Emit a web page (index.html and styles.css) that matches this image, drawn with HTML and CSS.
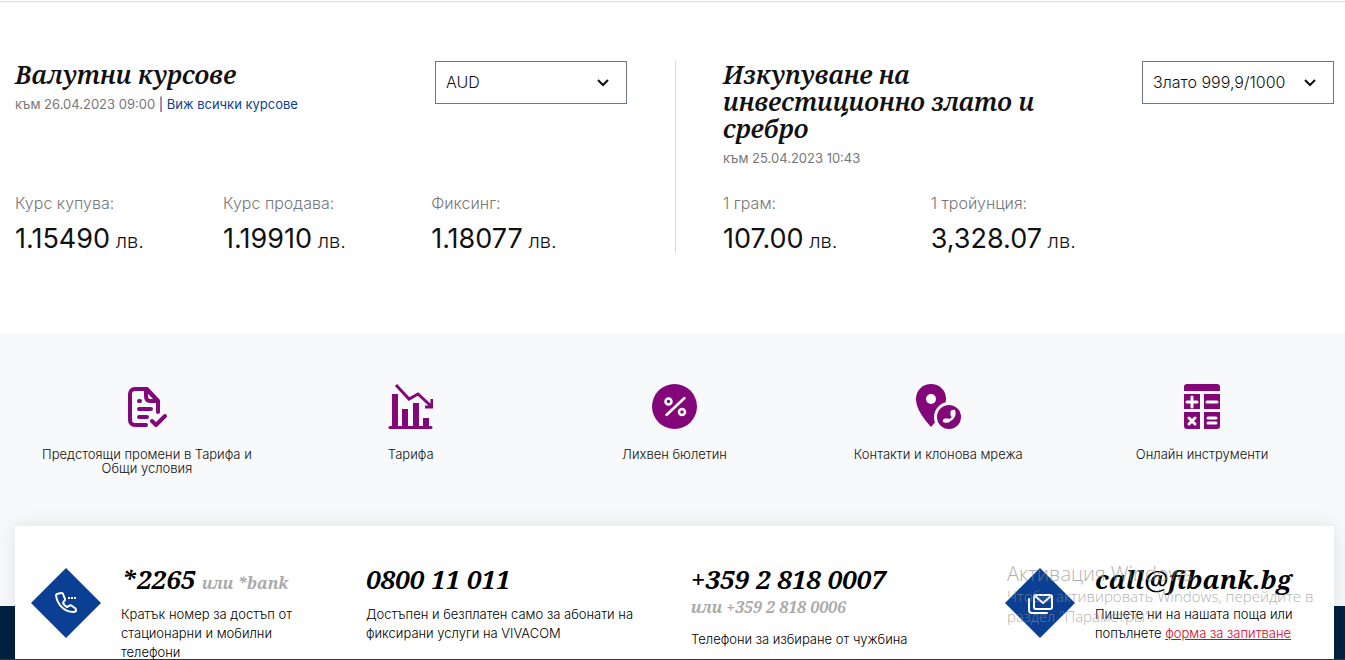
FILE: index.html
```html
<!DOCTYPE html>
<html lang="bg">
<head>
    <meta charset="UTF-8">
    <meta name="viewport" content="width=device-width, initial-scale=1.0">
    <title>Валутни курсове</title>
    <link rel="stylesheet" href="styles.css">
</head>
<body>
    <main class="rates">
        <section class="rate-box">
            <div class="rate-head">
                <div class="rate-title">
                    <h2>Валутни курсове</h2>
                    <p class="date">към 26.04.2023 09:00 <span class="bar">|</span> <a href="#">Виж всички курсове</a></p>
                </div>
                <div class="select">
                    <select aria-label="Валута">
                        <option>AUD</option>
                        <option>EUR</option>
                        <option>USD</option>
                    </select>
                    <svg width="12" height="8" viewBox="0 0 12 8"><path d="M1 1l5 5 5-5" fill="none" stroke="#111" stroke-width="2"/></svg>
                </div>
            </div>
            <dl class="values">
                <div><dt>Курс купува:</dt><dd>1.15490<small> лв.</small></dd></div>
                <div><dt>Курс продава:</dt><dd>1.19910<small> лв.</small></dd></div>
                <div><dt>Фиксинг:</dt><dd>1.18077<small> лв.</small></dd></div>
            </dl>
        </section>
        <section class="rate-box">
            <div class="rate-head">
                <div class="rate-title">
                    <h2>Изкупуване на инвестиционно злато и сребро</h2>
                    <p class="date">към 25.04.2023 10:43</p>
                </div>
                <div class="select">
                    <select aria-label="Метал">
                        <option>Злато 999,9/1000</option>
                        <option>Сребро 999/1000</option>
                    </select>
                    <svg width="12" height="8" viewBox="0 0 12 8"><path d="M1 1l5 5 5-5" fill="none" stroke="#111" stroke-width="2"/></svg>
                </div>
            </div>
            <dl class="values">
                <div><dt>1 грам:</dt><dd>107.00<small> лв.</small></dd></div>
                <div><dt>1 тройунция:</dt><dd>3,328.07<small> лв.</small></dd></div>
            </dl>
        </section>
    </main>

    <nav class="links">
        <a href="#">
            <svg viewBox="0 0 45 45" fill="none" stroke="#830779" stroke-width="4" stroke-linecap="round" stroke-linejoin="round">
                <path d="M22 41H11c-3 0-5-2-5-5V10c0-3 2-5 5-5h12l11 12v11"/>
                <path d="M22 5v7c0 3 1 5 4 5h8M24 7l9 9"/>
                <path d="M15 17h1M15 25h12M15 33h8M28 37l4 4 9-9"/>
            </svg>
            <span>Предстоящи промени в Тарифа и Общи условия</span>
        </a>
        <a href="#">
            <svg viewBox="0 0 45 45" fill="#830779">
                <path d="M4 10h6v32H4zM14 25h6v17h-6zM25 19h6v23h-6zM35 34h6v8h-6z"/>
                <path d="M2 43.5h41" stroke="#830779" stroke-width="3" stroke-linecap="round"/>
                <path d="M8 1l13 14 9-5 13 12M37 23h7v-8" fill="none" stroke="#830779" stroke-width="3"/>
            </svg>
            <span>Тарифа</span>
        </a>
        <a href="#">
            <svg viewBox="0 0 45 45">
                <circle cx="22.5" cy="22.5" r="22.5" fill="#830779"/>
                <g fill="none" stroke="#fff" stroke-width="2.5" stroke-linecap="round">
                    <path d="M14.500 31l18-17"/>
                    <circle cx="16.500" cy="17.500" r="3"/>
                    <circle cx="30" cy="28" r="3"/>
                </g>
            </svg>
            <span>Лихвен бюлетин</span>
        </a>
        <a href="#">
            <svg viewBox="0 0 45 45">
                <path d="M15 0C7 0 0 6 0 15c0 10 8 20 15 28 8-9 15-18 15-28C30 6 23 0 15 0z" fill="#830779"/>
                <circle cx="15" cy="15" r="5" fill="#fff"/>
                <circle cx="33" cy="33" r="15" fill="#f8f9fb"/>
                <circle cx="33" cy="33" r="12" fill="#830779"/>
                <path d="M38 27c2 6-4 11-10 10" fill="none" stroke="#fff" stroke-width="2.5" stroke-linecap="round"/>
                <path d="M36.500 28v3M29 36.500h3" stroke="#fff" stroke-width="4" stroke-linecap="round"/>
            </svg>
            <span>Контакти и клонова мрежа</span>
        </a>
        <a href="#">
            <svg viewBox="0 0 45 45">
                <path d="M4 7V3c0-2 1-3 3-3h30c2 0 3 1 3 3v4zM4 10h16v15H4zM24 10h16v15H24zM4 28h16v17H7c-2 0-3-1-3-3zM24 28h16v14c0 2-1 3-3 3H24z" fill="#830779"/>
                <path d="M7 18h10M12 13v10M27 18h10M9 34l6 6M15 34l-6 6M28 34h8M28 39h8" stroke="#fff" stroke-width="3" stroke-linecap="round"/>
            </svg>
            <span>Онлайн инструменти</span>
        </a>
    </nav>

    <footer class="footer">
        <div class="contacts">
            <div class="contact">
                <svg class="diamond" viewBox="0 0 70 70">
                    <path d="M35 0l35 35-35 35L0 35z" fill="#0a3f94"/>
                    <g fill="none" stroke="#fff" stroke-width="2" stroke-linejoin="round">
                        <path d="M26 26l4-1c1 0 2 0 2 1l2 5c0 1 0 2-1 2l-1 2c1 2 2 3 4 4l2-1c1-1 2-1 3 0l3 2c1 1 1 1 1 2v1c-1 1-2 1-3 1-9 0-16-8-17-17z"/>
                        <path d="M37 30h2M40 30h2M43 30h2"/>
                    </g>
                </svg>
                <div>
                    <h3>*2265 <small>или *bank</small></h3>
                    <p>Кратък номер за достъп от стационарни и мобилни телефони</p>
                </div>
            </div>
            <div class="contact">
                <div>
                    <h3>0800 11 011</h3>
                    <p>Достъпен и безплатен само за абонати на фиксирани услуги на VIVACOM</p>
                </div>
            </div>
            <div class="contact">
                <div>
                    <h3>+359 2 818 0007</h3>
                    <h4>или +359 2 818 0006</h4>
                    <p>Телефони за избиране от чужбина</p>
                </div>
            </div>
            <div class="contact">
                <svg class="diamond" viewBox="0 0 70 70">
                    <path d="M35 0l35 35-35 35L0 35z" fill="#0a3f94"/>
                    <g fill="none" stroke="#fff" stroke-width="2" stroke-linecap="round" stroke-linejoin="round">
                        <rect x="29" y="27" width="18" height="14" rx="2"/>
                        <path d="M30 28l8 7 8-7M24 31v11c0 2 1 3 3 3h15"/>
                    </g>
                </svg>
                <div>
                    <h3>call@fibank.bg</h3>
                    <p>Пишете ни на нашата поща или попълнете <a href="#">форма за запитване</a></p>
                </div>
            </div>
        </div>
    </footer>

    <aside class="activation">
        <strong>Активация Windows</strong>
        <p>Чтобы активировать Windows, перейдите в раздел "Параметры".</p>
    </aside>
</body>
</html>
```
FILE: styles.css
```css
* {
    box-sizing: border-box;
}
body {
    margin: 0;
    height: 100vh;
    overflow: hidden;
    display: flex;
    flex-direction: column;
    border-top: 1px solid #fff;
    border-bottom: 1px solid #333;
    background: #fff;
    color: #111;
    font-family: Inter, "Liberation Sans", sans-serif;
    font-weight: 300;
}
h2, h3, h4, p, dl, dd {
    margin: 0;
}
h2, h3, h4 {
    font-family: "Noto Serif", "Droid Serif", "DejaVu Serif", serif;
    font-style: italic;
    font-weight: 700;
}

/* rates */
.rates {
    display: grid;
    grid-template-columns: 661fr 658fr;
    border-top: 1px solid #dcdcdc;
    padding: 59px 11px 80px 15px;
}
.rate-box {
    display: flex;
    flex-direction: column;
    justify-content: space-between;
    gap: 26px;
}
.rate-box:first-child {
    padding-right: 48px;
    border-right: 1px solid #d5d7e0;
}
.rate-box:last-child {
    padding-left: 47px;
}
.rate-head {
    display: flex;
    justify-content: space-between;
    align-items: flex-start;
    gap: 64px;
}
.rate-title {
    flex: 1;
}
.rate-title h2 {
    font-size: 25px;
    line-height: 27px;
    font-weight: 600;
}
.date {
    margin-top: 7px;
    font-size: 13px;
    line-height: 18px;
    font-weight: 400;
    color: #777;
}
.date .bar {
    color: #0a3f94;
}
.date a {
    color: #0a3f94;
    text-decoration: none;
}
.select {
    display: grid;
    width: 192px;
    align-items: center;
}
.select select, .select svg {
    grid-area: 1 / 1;
}
.select select {
    appearance: none;
    height: 43px;
    padding: 0 10px 2px;
    border: 1px solid #6b7687;
    border-radius: 0;
    background: #fff;
    color: #111;
    font: inherit;
    font-size: 16px;
}
.select svg {
    justify-self: end;
    margin-right: 18px;
    pointer-events: none;
}
.values {
    display: grid;
    grid-template-columns: 34% 34% 32%;
}
.values dt {
    font-size: 16px;
    line-height: 20px;
    color: #777;
}
.values dd {
    margin-top: 12px;
    font-size: 27px;
    line-height: 28px;
    font-weight: 400;
}
.values small {
    font-size: 20px;
    line-height: 20px;
    font-weight: 300;
}

/* icon links */
.links {
    display: grid;
    grid-template-columns: repeat(5, 1fr);
    padding: 51px 11px 131px 15px;
    background: #f8f9fb;
}
.links a {
    display: flex;
    flex-direction: column;
    align-items: center;
    gap: 18px;
    padding: 0 24px;
    color: #111;
    font-size: 13px;
    line-height: 14px;
    text-align: center;
    text-decoration: none;
}
.links svg {
    width: 45px;
    height: 45px;
}

/* contacts */
.footer {
    flex: 1;
    padding: 0 11px 0 15px;
    background: #00213f;
}
.contacts {
    display: grid;
    grid-template-columns: 335fr 325fr 314fr 329fr;
    margin-top: -80px;
    padding: 36px 0 0 16px;
    background: #fff;
    color: #000;
    box-shadow: 0 0 20px rgba(0, 0, 0, 0.1);
}
.contact {
    display: flex;
    gap: 20px;
    padding-right: 36px;
}
.diamond {
    flex: none;
    width: 70px;
    height: 70px;
    margin-top: 6px;
}
.contact h3 {
    font-size: 26px;
    line-height: 34px;
    white-space: nowrap;
}
.contact h3 small, .contact h4 {
    font-size: 16px;
    line-height: 22px;
    color: #aaa;
}
.contact h4 {
    margin-bottom: 12px;
}
.contact p {
    margin-top: 9px;
    font-size: 13px;
    line-height: 19px;
}
.contact p a {
    color: #d8052a;
}

.activation {
    position: absolute;
    right: 28px;
    bottom: 34px;
    width: 310px;
    color: rgba(140, 140, 140, 0.7);
    font-family: "Open Sans", "Noto Sans", sans-serif;
    font-size: 15px;
    line-height: 20px;
    pointer-events: none;
}
.activation strong {
    font-size: 20px;
    line-height: 24px;
    font-weight: 300;
}
```
